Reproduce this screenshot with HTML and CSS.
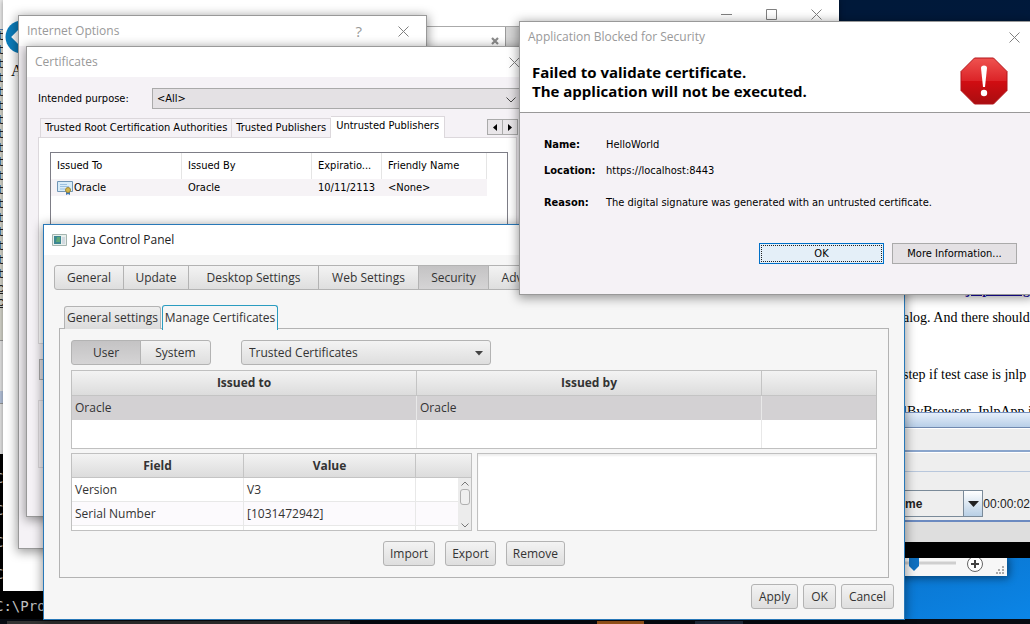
FILE: index.html
```html
<!DOCTYPE html>
<html lang="en">
<head>
<meta charset="utf-8">
<title>Desktop</title>
<link rel="stylesheet" href="styles.css">
</head>
<body>
<main class="desktop">

  <section class="console" aria-label="Console">
    <p>C:\Prog</p><p>C:\Prog</p><p>C:\Prog</p><p>C:\Prog</p><p>C:\Pro</p>
  </section>
  <section class="editor" aria-hidden="true">
    <div class="editor-head"></div>
    <div class="editor-text"><p>t</p><p>t</p><p>t</p><p>t</p><p>t</p><p>t</p><p>t</p><p>t</p><p>t</p><p>t</p><p>t</p><p>t</p><p>t</p><p>t</p><p>t</p><p>t</p><p>t</p><p>t</p><p class="under">c</p><p class="under">c</p></div>
    <div class="editor-foot"></div>
    <div class="editor-bar"></div>
    <div class="editor-foot"></div>
  </section>

  <section class="browser" aria-label="Browser">
    <div class="caption-buttons">
      <button aria-label="Minimize"><svg width="11" height="11"><path d="M0 5.5H11"/></svg></button>
      <button aria-label="Maximize"><svg width="11" height="11"><path d="M.5.5H10.500V10.500H.5Z"/></svg></button>
      <button aria-label="Close"><svg width="11" height="11"><path d="M.5.5 10.500 10.500M10.500.5.5 10.500"/></svg></button>
    </div>
    <button class="back" aria-label="Back"><svg width="36" height="34" viewBox="0 0 36 34"><circle cx="18" cy="17" r="16.500" fill="#0b7cba"/><path d="M18 9 10 17l8 8M10 17h17" fill="none" stroke="#fff" stroke-width="4"/></svg></button>
    <div class="browser-tabs"><div class="browser-tab"><button aria-label="Close tab"><svg width="8" height="8"><path d="M1 1 7 7M7 1 1 7" stroke="#8b8b8b" stroke-width="2.200"/></svg></button></div></div>
    <p class="browser-text">A</p>
  </section>

  <section class="document" aria-label="Document">
    <p class="doc-link"><a href="#dialog">jnlp dialog</a></p>
    <p>alog. And there should</p>
    <p>step if test case is jnlp</p>
    <p>lByBrowser, JnlpApp i</p>
  </section>

  <section class="statusbar" aria-label="Zoom">
    <svg width="104" height="18" viewBox="0 0 104 18"><path d="M0 5H52" stroke="#cfcfcf" stroke-width="3"/><path d="M5 0H15V8L10 13 5 8Z" fill="#0f70c0"/><circle cx="71" cy="6" r="7.500" fill="#fff" stroke="#666"/><path d="M67 6H75M71 2V10" stroke="#444" stroke-width="2"/><path d="M98 9h2M94 12h2m2 0h2M92 15h2m1 0h2m1 0h2" stroke="#aaa" stroke-width="2"/></svg>
  </section>

  <section class="swing" aria-label="Recorder">
    <div class="swing-title"></div>
    <div class="swing-row"></div>
    <div class="swing-row swing-short"></div>
    <div class="swing-controls">
      <button class="swing-combo"><span>me</span><i><svg width="11" height="6"><path d="M0 0H11L5.500 6Z" fill="#222"/></svg></i></button>
      <span class="timer">00:00:02</span>
    </div>
    <div class="swing-foot"></div>
  </section>

  <footer class="taskbar"><i class="task-a"></i><i class="task-b"></i><i class="task-c"></i></footer>

  <section class="win internet" aria-label="Internet Options">
    <header class="win-title"><h2>Internet Options</h2><span class="help">?</span>
      <button aria-label="Close"><svg width="11" height="11"><path d="M.5.5 10.500 10.500M10.500.5.5 10.500"/></svg></button></header>
  </section>

  <section class="win certs" aria-label="Certificates">
    <header class="win-title"><h2>Certificates</h2>
      <button aria-label="Close"><svg width="11" height="11"><path d="M.5.5 10.500 10.500M10.500.5.5 10.500"/></svg></button></header>
    <div class="certs-body">
      <div class="purpose"><label for="purpose">Intended purpose:</label>
        <span class="picker"><select id="purpose"><option>&lt;All&gt;</option></select><svg width="10" height="6"><path d="M.5.5 5 5 9.500.5" fill="none" stroke="#444"/></svg></span></div>
      <div class="store-tabs" role="tablist">
        <button role="tab">Trusted Root Certification Authorities</button><button role="tab">Trusted Publishers</button><button role="tab" aria-selected="true" class="on">Untrusted Publishers</button>
        <div class="spinner"><button aria-label="Previous tabs"><svg width="4" height="7"><path d="M4 0V7L0 3.500Z"/></svg></button><button aria-label="Next tabs"><svg width="4" height="7"><path d="M0 0V7L4 3.500Z"/></svg></button></div>
      </div>
      <div class="store-page">
        <div class="store-list">
          <table>
            <colgroup><col class="c-to"><col class="c-by"><col class="c-exp"><col class="c-name"></colgroup>
            <thead><tr><th>Issued To</th><th>Issued By</th><th>Expiratio...</th><th>Friendly Name</th></tr></thead>
            <tbody><tr><td><span class="cert"><svg width="16" height="14" viewBox="0 0 16 14"><path d="M.5.5H15.500V10.500H.5Z" fill="#d8ecf9" stroke="#7196b6"/><path d="M3 3.500h7M3 5.500h9M3 8h5" stroke="#9cc0e0"/><path d="M9 9v5l2-1 2 1V9" fill="#3d76b3"/><circle cx="11" cy="9" r="2.500" fill="#d4b94c" stroke="#9d8439"/></svg>Oracle</span></td><td>Oracle</td><td>10/11/2113</td><td>&lt;None&gt;</td></tr></tbody>
          </table>
        </div>
      </div>
      <button class="ghost" aria-label="Import"></button>
      <div class="ghost-group"></div>
    </div>
  </section>

  <section class="java" aria-label="Java Control Panel">
    <header class="java-title"><svg width="15" height="12"><path d="M.5.5H14.500V11.500H.5Z" fill="#e8efec" stroke="#a5b5b0"/><path d="M2 2H9V10H2Z" fill="#3c8791"/><path d="M5 3H8V8H4Z" fill="#5fa878"/><path d="M10 3h3v7h-3z" fill="#d1d9e0"/></svg><h2>Java Control Panel</h2></header>
    <div class="java-body">
      <nav class="segments main-tabs"><button class="w-a">General</button><button class="w-b">Update</button><button class="w-c">Desktop Settings</button><button class="w-d">Web Settings</button><button class="w-e on">Security</button><button class="w-f">Advanced</button></nav>
      <div class="subtabs" role="tablist"><button role="tab">General settings</button><button role="tab" class="on" aria-selected="true">Manage Certificates</button></div>
      <div class="panel">
        <div class="filters">
          <div class="segments scope"><button class="on">User</button><button>System</button></div>
          <span class="picker"><select aria-label="Certificate type"><option>Trusted Certificates</option></select><svg width="8" height="5"><path d="M0 0H8L4 4.500Z" fill="#444"/></svg></span>
        </div>
        <div class="issued">
          <table>
            <colgroup><col class="c-wide"><col class="c-wide"><col></colgroup>
            <thead><tr><th>Issued to</th><th>Issued by</th><th></th></tr></thead>
            <tbody><tr class="picked"><td>Oracle</td><td>Oracle</td><td></td></tr><tr class="blank"><td></td><td></td><td></td></tr></tbody>
          </table>
        </div>
        <div class="details">
          <div class="fields">
            <table>
              <colgroup><col class="c-field"><col class="c-field"><col></colgroup>
              <thead><tr><th>Field</th><th>Value</th><th></th></tr></thead>
              <tbody><tr><td>Version</td><td>V3</td><td></td></tr><tr class="alt"><td>Serial Number</td><td>[1031472942]</td><td></td></tr><tr><td></td><td></td><td></td></tr></tbody>
            </table>
            <div class="scroll"><svg width="8" height="5"><path d="M.5 4.500 4 1l3.500 3.500"/></svg><i></i><svg width="8" height="5"><path d="M.5.5 4 4 7.500.5"/></svg></div>
          </div>
          <textarea aria-label="Field value" readonly></textarea>
        </div>
        <div class="actions"><button>Import</button><button>Export</button><button>Remove</button></div>
      </div>
      <div class="confirm"><button>Apply</button><button>OK</button><button>Cancel</button></div>
    </div>
  </section>

  <section class="win blocked" aria-label="Application Blocked for Security">
    <header class="win-title"><h2>Application Blocked for Security</h2>
      <button aria-label="Close"><svg width="11" height="11"><path d="M.5.5 10.500 10.500M10.500.5.5 10.500"/></svg></button></header>
    <div class="alert">
      <h1>Failed to validate certificate.<br>The application will not be executed.</h1>
      <svg width="48" height="48" viewBox="0 0 48 48"><defs><linearGradient id="red" x2="0" y2="1"><stop offset="0" stop-color="#ef5350"/><stop offset=".49" stop-color="#dc2428"/><stop offset=".5" stop-color="#d20d12"/><stop offset="1" stop-color="#a90d10"/></linearGradient></defs><path d="M14.500 1H33.500L47 14.500V33.500L33.500 47H14.500L1 33.500V14.500Z" fill="url(#red)" stroke="#b3151a"/><path d="M21 11Q21 8.500 24 8.500T27 11L25 30H23Z" fill="#fff"/><circle cx="24" cy="36" r="3.200" fill="#fff"/></svg>
    </div>
    <div class="blocked-body">
      <dl><dt>Name:</dt><dd>HelloWorld</dd><dt>Location:</dt><dd>https://localhost:8443</dd><dt class="reason">Reason:</dt><dd class="reason">The digital signature was generated with an untrusted certificate.</dd></dl>
      <div class="blocked-actions"><button class="default"><span>OK</span></button><button>More Information...</button></div>
    </div>
  </section>
</main>
</body>
</html>
```

FILE: styles.css
```css
* { box-sizing: border-box; }
body { margin: 0; font: 12px/16px "Open Sans", "Noto Sans", sans-serif; color: #333; }
p, h1, h2, dl, dd { margin: 0; }
h2 { font-size: 12px; font-weight: 400; line-height: 16px; }
button, select, textarea { font: inherit; color: inherit; margin: 0; padding: 0; border: 0; background: none; border-radius: 0; white-space: nowrap; }
svg { display: block; flex: none; }
table { width: 100%; table-layout: fixed; border-collapse: separate; border-spacing: 0; }
th, td { padding: 0; text-align: left; font-weight: 400; white-space: nowrap; overflow: hidden; }
i { display: block; }

.desktop { position: relative; min-height: 100vh; overflow: hidden; background: linear-gradient(160deg, #001936 0, #00193b 40%, #0a5fae 75%, #0b86e8 100%); }

/* Background windows */
.console { position: absolute; left: 0; bottom: 0; width: 30%; top: 454px; background: #000; color: #c0c0c0; font: 14px/32px "DejaVu Sans Mono", monospace; padding-top: 8px; overflow: hidden; }
.console p { text-indent: -5px; }
.editor { position: absolute; left: 0; top: 0; width: 8px; background: #d7d7cd; overflow: hidden; }
.editor-head { height: 30px; background: #eee; border-bottom: 1px solid #5b86b5; }
.editor-text { height: 310px; font: 13px/14px "Liberation Mono", monospace; color: #222; text-indent: -3px; }
.editor-text .under { text-decoration: underline; }
.editor-foot { height: 51px; border-top: 1px solid #999; background: #e6e6e6; }
.editor-bar { height: 12px; background: #b8c6de; }

.browser { position: absolute; left: 3px; top: 0; right: 191px; height: 591px; background: #fff; color: #000; box-shadow: 0 0 6px #0006; }
.caption-buttons { display: flex; justify-content: flex-end; gap: 34px; padding: 9px 17px 0 0; }
.caption-buttons path, .win-title path { fill: none; stroke: #808080; }
.browser-tabs { margin: 6px 0 0 420px; height: 24px; background: #d5d5d5; border-top: 1px solid #aaa; }
.browser-tab { width: 83px; height: 23px; background: #fff; border-right: 1px solid #999; display: flex; justify-content: flex-end; padding: 10px 6px 0 0; }
.browser-tab button { height: 8px; }
.back { position: absolute; left: 1px; top: 20px; }
.browser-text { font: 16px/20px "Liberation Serif", serif; padding: 11px 8px; }

.document { position: absolute; left: 836px; right: 0; top: 285px; height: 130px; padding-left: 67px; background: #fff; color: #000; font: 14px/18px "Liberation Serif", serif; white-space: nowrap; overflow: hidden; display: flex; flex-direction: column; }
.document p + p { margin-top: 19px; }
.document .doc-link { height: 12px; line-height: 10px; text-align: right; font-weight: 700; }
.document .doc-link + p { margin-top: 14px; }
.document p:nth-child(3) { margin-top: 39px; }
.doc-link a { color: #1a0dab; }

.statusbar { position: absolute; left: 500px; right: 23px; top: 555px; height: 21px; background: #f7f7f7; display: flex; justify-content: flex-end; padding: 3px 1px 0 0; box-shadow: 2px 2px 8px #0007; }
.statusbar svg { margin-right: -2px; }
.swing { position: absolute; left: 881px; right: 0; top: 412px; background: #eee; border-bottom: 16px solid #000; border-top: 1px solid #7591c0; }
.swing-title { height: 15px; background: linear-gradient(#e5eefa, #b8cfe8); border-bottom: 1px solid #7089b0; }
.swing-row { height: 24px; border-top: 1px solid #fff; border-bottom: 2px solid #8aa5cc; }
.swing-short { height: 20px; border-bottom: 1px solid #b8c7dc; }
.swing-controls { padding: 18px 0 3px 8px; display: flex; align-items: center; color: #222; }
.swing-combo { width: 96px; height: 27px; border: 1px solid #7a8a99; display: flex; align-items: center; justify-content: space-between; padding-left: 15px; font: bold 12px/16px "Liberation Sans", sans-serif; }
.swing-combo i { align-self: stretch; width: 19px; border-left: 1px solid #7a8a99; background: linear-gradient(#fff, #b8cfe5); display: grid; place-items: center; }
.timer { font: 12px/16px "Liberation Sans", sans-serif; white-space: nowrap; }
.swing-foot { height: 22px; border-top: 2px solid #6b8ac0; background: #dedede; }
.taskbar { position: absolute; left: 0; right: 0; bottom: 0; height: 5px; background: #070b12; display: flex; gap: 0; padding-left: 7px; }
.taskbar .task-a { width: 343px; height: 3px; background: #333; margin-top: 2px; }
.taskbar .task-b { width: 47px; margin-left: 247px; background: #b4631e; margin-top: 2px; }
.taskbar .task-c { width: 48px; margin-left: 51px; background: #263346; margin-top: 2px; }

/* Windows dialogs */
.win { position: absolute; background: #f5f2f6; border: 1px solid #999; box-shadow: 0 2px 10px 1px #0006; color: #000; font: 11px/14px "DejaVu Sans Condensed", "Open Sans", sans-serif; }
.win-title { display: flex; align-items: center; height: 30px; padding: 0 17px 0 8px; background: #fff; color: #999; }
.win-title h2 { font-family: "Open Sans", "Noto Sans", sans-serif; flex: 1; }
.win-title .help { font: 15px/16px "Open Sans", sans-serif; margin-right: 36px; }
.internet { left: 18px; top: 15px; width: 409px; height: 534px; }
.certs { left: 26px; top: 46px; width: 507px; height: 471px; }
.certs .win-title { padding-right: 12px; }
.certs-body { padding: 11px 8px 0 11px; }
.purpose { display: flex; align-items: center; }
.purpose label { width: 114px; }
.picker { position: relative; display: flex; flex: 1; }
.picker select { appearance: none; width: 100%; }
.picker svg { position: absolute; right: 8px; top: 50%; margin-top: -2px; pointer-events: none; }
.purpose select { height: 21px; padding: 0 4px; background: #e4e1e4; border: 1px solid #aaa; }
.store-tabs { display: flex; align-items: flex-end; margin: 6px 0 0 2px; height: 22px; }
.store-tabs > button { height: 19px; padding: 0 4px; border: 1px solid #dcd8dc; border-bottom: 0; border-left-width: 0; }
.store-tabs > button:first-child { border-left-width: 1px; }
.store-tabs > .on { height: 22px; padding: 0 5px 3px; background: #fff; margin-bottom: -1px; }
.spinner { display: flex; margin: 0 6px 2px auto; }
.spinner button { width: 16px; height: 16px; border: 1px solid #aaa; background: #e9e6e9; display: grid; place-items: center; }
.spinner button + button { margin-left: -1px; }
.store-page { height: 207px; background: #fff; border: 1px solid #dcd8dc; padding: 14px 8px 0 11px; margin-right: 7px; }
.store-list { height: 170px; border: 1px solid #7d7d86; }
.store-list table { width: 436px; }
.store-list th { height: 26px; padding-left: 6px; border-right: 1px solid #e5e5e5; }
.store-list td { height: 17px; padding-left: 6px; background: #f6f3f6; }
.c-to { width: 131px; } .c-by { width: 130px; } .c-exp { width: 70px; }
.cert { display: flex; align-items: center; gap: 1px; }
.ghost { display: block; width: 80px; height: 21px; margin: 15px 0 0 1px; border: 1px solid #aaa; background: #e4e1e4; }
.ghost-group { margin-top: 20px; height: 68px; border: 1px solid #dcd8dc; }

.blocked { left: 519px; right: -3px; top: 21px; }
.blocked .win-title { padding-right: 12px; }
.alert { display: flex; justify-content: space-between; align-items: flex-start; height: 61px; padding: 5px 24px 0 12px; background: #fff; border-bottom: 1px solid #999; }
.alert h1 { font: bold 15px/19px "Open Sans", sans-serif; padding-top: 6px; white-space: nowrap; }
.blocked-body { padding: 25px 15px 30px 24px; }
.blocked dl { display: grid; grid-template-columns: 62px auto; row-gap: 12px; }
.blocked dt { font-weight: 700; }
.blocked .reason { margin-top: 6px; }
.blocked-actions { display: flex; justify-content: flex-end; gap: 8px; margin-top: 33px; }
.blocked-actions button { width: 125px; height: 21px; border: 1px solid #aaa; background: #e4e1e4; }
.blocked-actions .default { border: 1px solid #0070c8; background: #e4eff8; padding: 1px; }
.default span { display: block; border: 1px dotted #222; height: 17px; line-height: 15px; }

/* Java Control Panel */
.java { position: absolute; left: 43px; right: 125px; top: 224px; border: 1px solid #2878b8; background: #f6f6f6; box-shadow: 0 2px 10px 1px #0006; }
.java-title { display: flex; align-items: center; gap: 6px; height: 30px; padding-left: 8px; background: #fff; color: #222; }
.java-body { padding: 10px; }
.segments { display: flex; }
.segments button { height: 25px; border: 1px solid #b3b3b3; margin-right: -1px; background: linear-gradient(#f3f3f3, #dedede); }
.segments button:first-child { border-radius: 3px 0 0 3px; }
.segments button:last-child { border-radius: 0 3px 3px 0; }
.segments .on { background: linear-gradient(#c4c3c4, #d5d4d5); }
.w-a { width: 70px; } .w-b { width: 66px; } .w-c { width: 131px; } .w-d { width: 101px; } .w-e { width: 71px; } .w-f { width: 82px; }
.subtabs { display: flex; align-items: flex-end; gap: 1px; margin: 15px 0 0 10px; height: 24px; }
.subtabs button { width: 97px; height: 23px; border: 1px solid #b3b3b3; border-bottom: 0; border-radius: 3px 3px 0 0; background: linear-gradient(#eee, #dcdcdc); }
.subtabs .on { width: 116px; height: 25px; border-color: #2a9cc0; background: #f6f6f6; margin-bottom: -1px; position: relative; }
.panel { margin: -1px 5px 0; border: 1px solid #b3b3b3; padding: 11px 11px 11px; }
.filters { display: flex; gap: 31px; }
.scope button { width: 71px; }
.scope button:first-child { width: 70px; }
.java .picker { flex: 0 0 250px; }
.java select { height: 25px; padding: 0 7px; border: 1px solid #b3b3b3; border-radius: 3px; background: linear-gradient(#f3f3f3, #dedede); }
.issued { margin-top: 5px; border: 1px solid #c0c0c0; background: #fff; }
.java th { height: 24px; text-align: center; font-weight: 700; background: linear-gradient(#f3f3f3, #dcdcdc); border-right: 1px solid #c4c4c4; border-bottom: 1px solid #c4c4c4; }
.java .issued th { height: 25px; }
.java td { height: 24px; padding-left: 3px; border-right: 1px solid #e8e8e8; }
.java th:last-child, .java td:last-child { border-right: 0; }
.picked td { background: #d3d1d3; }
.issued .blank td { height: 28px; }
.c-wide { width: 345px; }
.details { display: flex; gap: 5px; margin-top: 4px; height: 78px; }
.fields { flex: 0 0 401px; position: relative; overflow: hidden; border: 1px solid #c0c0c0; background: #fff; }
.fields td { border-bottom: 1px solid #e8e8e8; }
.fields .alt td { background: #fcfafd; }
.c-field { width: 172px; }
.scroll { position: absolute; right: 0; top: 24px; bottom: 0; width: 13px; padding: 3px 1px 2px; background: #ececec; display: flex; flex-direction: column; align-items: center; }
.scroll svg:last-child { margin-top: auto; }
.scroll path { fill: none; stroke: #777; }
.scroll i { width: 10px; height: 16px; margin-top: 3px; border: 1px solid #b0b0b0; border-radius: 3px; background: #f0f0f0; }
.details textarea { flex: 1; min-width: 0; resize: none; background: #fff; border: 1px solid #c0c0c0; box-shadow: inset 0 2px 2px #0001; }
.actions, .confirm { display: flex; justify-content: center; gap: 10px; margin-top: 10px; }
.actions button, .confirm button { height: 25px; padding: 0 6px; border: 1px solid #b3b3b3; border-radius: 3px; background: linear-gradient(#f3f3f3, #dedede); }
.confirm { justify-content: flex-end; gap: 5px; margin-top: 6px; }
.confirm button { padding: 0 7px; }
```
